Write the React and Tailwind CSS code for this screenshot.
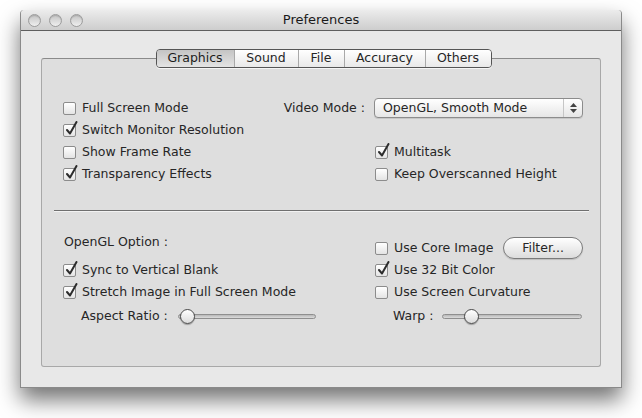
import React from 'react';

const font = { fontFamily: '"DejaVu Sans", "Liberation Sans", sans-serif' };

const Check = ({ checked }) => (
  <span className="relative inline-block w-[13px] h-[13px] shrink-0 rounded-[2px] border border-[#8c8c8c] bg-gradient-to-b from-white to-[#e4e4e4]">
    {checked && (
      <svg className="absolute left-[1px] top-[-4px]" width="13" height="15" viewBox="0 0 13 15">
        <path d="M2 9 L5 12.5 L11.5 1" fill="none" stroke="#2c2c2c" strokeWidth="2" strokeLinecap="round" strokeLinejoin="round" />
      </svg>
    )}
  </span>
);

const Row = ({ checked, label }) => (
  <div className="flex items-center h-[22px] gap-[6px]">
    <Check checked={checked} />
    <span>{label}</span>
  </div>
);

const Slider = ({ width, pos }) => (
  <div className="relative h-[16px] flex items-center" style={{ width }}>
    <div className="w-full h-[5px] rounded-full border border-[#8f8f8f] bg-gradient-to-b from-[#b8b8b8] to-[#dcdcdc]" />
    <div
      className="absolute top-[1px] w-[15px] h-[15px] rounded-full border border-[#4a4a4a] bg-gradient-to-b from-white to-[#dcdcdc] shadow-[0_1px_1px_rgba(0,0,0,0.3)]"
      style={{ left: pos }}
    />
  </div>
);

const tabs = [
  { label: 'Graphics', w: 77 },
  { label: 'Sound', w: 64 },
  { label: 'File', w: 46 },
  { label: 'Accuracy', w: 81 },
  { label: 'Others', w: 66 },
];

export default function App() {
  return (
    <div className="w-[642px] h-[418px] bg-white text-[12.5px] text-[#262626]" style={font}>
      <div className="pt-[10px] pl-[20px]">
        <div className="w-[602px] h-[378px] flex flex-col bg-[#e8e8e8] border-x border-b border-[#8a8a8a] rounded-t-[4px] shadow-[0_12px_22px_rgba(0,0,0,0.55)]">
          {/* title bar */}
          <div className="relative h-[21px] shrink-0 flex items-center justify-center rounded-t-[4px] bg-gradient-to-b from-[#ececec] to-[#cdcdcd] border-b border-[#5e5e5e]">
            <div className="absolute left-[7px] top-[4px] flex gap-[8px]">
              {[0, 1, 2].map((i) => (
                <span key={i} className="w-[13px] h-[13px] rounded-full border border-[#9c9c9c] bg-gradient-to-b from-[#c4c4c4] to-[#efefef] shadow-[inset_0_1px_1px_rgba(0,0,0,0.15)]" />
              ))}
            </div>
            <span className="text-[13px] text-[#1a1a1a]">Preferences</span>
          </div>

          {/* content */}
          <div className="flex-1 flex flex-col px-[20px] pt-[18px] pb-[20px]">
            <div className="relative z-10 flex justify-center pl-[5px]">
              <div className="flex h-[19px] rounded-[4px] border border-[#555] overflow-hidden shadow-[0_1px_0_rgba(255,255,255,0.7)]">
                {tabs.map((t, i) => (
                  <div
                    key={t.label}
                    className={`flex items-center justify-center ${i > 0 ? 'border-l border-[#a9a9a9]' : ''} ${i === 0 ? 'bg-gradient-to-b from-[#c4c4c4] to-[#e4e4e4] text-[#1c1c1c]' : 'bg-gradient-to-b from-white to-[#e9e9e9]'}`}
                    style={{ width: t.w }}
                  >
                    {t.label}
                  </div>
                ))}
              </div>
            </div>

            <div className="-mt-[10px] flex-1 rounded-[3px] border border-[#a8a8a8] border-t-[#8a8a8a] bg-[#dedede] pt-[38px] pl-[21px] pr-[10px]">
              {/* top section */}
              <div className="flex flex-col">
                <div className="flex items-center h-[22px]">
                  <div className="w-[220px]"><Row label="Full Screen Mode" /></div>
                  <div className="w-[91px] text-right pr-[9px]">Video Mode :</div>
                  <div className="w-[209px] h-[20px] flex items-center rounded-[4px] border border-[#8c8c8c] bg-gradient-to-b from-white to-[#e6e6e6] shadow-[0_1px_0_rgba(0,0,0,0.1)]">
                    <span className="flex-1 pl-[8px]">OpenGL, Smooth Mode</span>
                    <span className="w-[19px] h-full flex flex-col items-center justify-center gap-[2px] border-l border-[#c6c6c6]">
                      <svg width="7" height="4" viewBox="0 0 7 4"><path d="M3.5 0 L7 4 L0 4 Z" fill="#444" /></svg>
                      <svg width="7" height="4" viewBox="0 0 7 4"><path d="M0 0 L7 0 L3.5 4 Z" fill="#444" /></svg>
                    </span>
                  </div>
                </div>
                <div className="flex"><Row checked label="Switch Monitor Resolution" /></div>
                <div className="flex">
                  <div className="w-[312px]"><Row label="Show Frame Rate" /></div>
                  <Row checked label="Multitask" />
                </div>
                <div className="flex">
                  <div className="w-[312px]"><Row checked label="Transparency Effects" /></div>
                  <Row label="Keep Overscanned Height" />
                </div>
              </div>

              <div className="mt-[25px] -ml-[9px] mr-[1px] h-px bg-[#6f6f6f] shadow-[0_1px_0_rgba(255,255,255,0.6)]" />

              {/* bottom section */}
              <div className="flex mt-[20px]">
                <div className="w-[312px] flex flex-col">
                  <div className="h-[22px] flex items-center pl-[1px]">OpenGL Option :</div>
                  <div className="mt-[6px]">
                    <Row checked label="Sync to Vertical Blank" />
                    <Row checked label="Stretch Image in Full Screen Mode" />
                  </div>
                  <div className="h-[26px] flex items-center pl-[18px] gap-[10px]">
                    <span>Aspect Ratio :</span>
                    <Slider width={138} pos={2} />
                  </div>
                </div>
                <div className="flex flex-col pt-[6px]">
                  <div className="flex items-center h-[22px]">
                    <div className="w-[128px]"><Row label="Use Core Image" /></div>
                    <div className="w-[80px] h-[22px] flex items-center justify-center rounded-full border border-[#7a7a7a] bg-gradient-to-b from-white to-[#dcdcdc] shadow-[0_1px_1px_rgba(0,0,0,0.15)]">
                      Filter...
                    </div>
                  </div>
                  <Row checked label="Use 32 Bit Color" />
                  <Row label="Use Screen Curvature" />
                  <div className="h-[26px] flex items-center pl-[18px] gap-[9px]">
                    <span>Warp :</span>
                    <Slider width={140} pos={22} />
                  </div>
                </div>
              </div>
            </div>
          </div>
        </div>
      </div>
    </div>
  );
}
